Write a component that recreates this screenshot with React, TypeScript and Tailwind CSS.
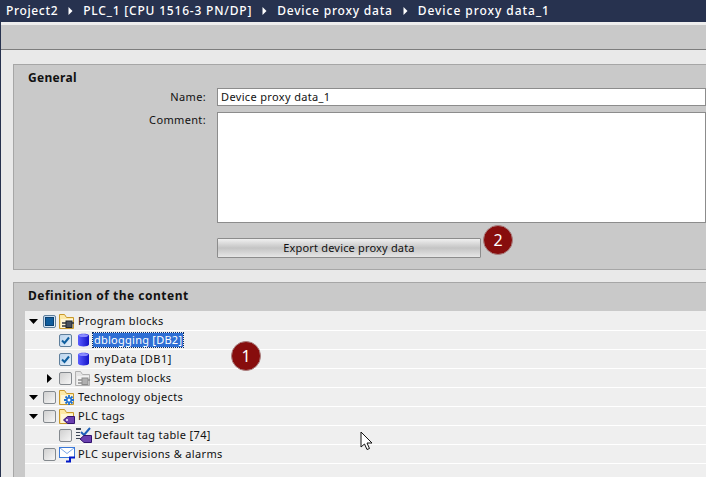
import React from "react";

const F = "font-['Noto_Sans',sans-serif]";

function Caret({ open }: { open?: boolean }) {
  return (
    <svg width="9" height="9" viewBox="0 0 9 9" className="shrink-0">
      {open ? <path d="M0 2H9L4.5 7Z" fill="#000" /> : <path d="M2 0V9L7 4.5Z" fill="#000" />}
    </svg>
  );
}

function Check({ state }: { state: "none" | "check" | "partial" }) {
  const bg =
    state === "none"
      ? "bg-gradient-to-br from-[#d0d0d0] to-[#f6f6f6] border-[#84898e]"
      : "bg-gradient-to-br from-[#b9d3ec] to-[#e6f0fa] border-[#5f7f9c]";
  return (
    <div className={`w-[13px] h-[13px] rounded-[2px] border ${bg} shrink-0 flex items-center justify-center`}>
      {state === "check" && (
        <svg width="11" height="11" viewBox="0 0 11 11">
          <path d="M2 5.5L4.5 8L9 2.5" fill="none" stroke="#0f5f9f" strokeWidth="2" />
        </svg>
      )}
      {state === "partial" && <div className="w-[9px] h-[9px] bg-[#0f5c9c] border border-[#0a3f70]" />}
    </div>
  );
}

function Folder({ children, grey }: { children?: React.ReactNode; grey?: boolean }) {
  const stroke = grey ? "#b0b0b0" : "#c8982c";
  const fill = grey ? "#e4e4e4" : "#fde9a6";
  return (
    <svg width="18" height="17" viewBox="0 0 18 17" className="shrink-0">
      <path d="M0.5 15.5V1.5H5.5L7.5 4.5H14.5V15.5Z" fill={fill} stroke={stroke} />
      <rect x="2" y="6" width="12" height="9" fill={grey ? "#f2f2f2" : "#fff6d6"} />
      {children}
    </svg>
  );
}

const Block = ({ grey }: { grey?: boolean }) => (
  <g>
    <path d="M3 10H15M3 13H7" stroke={grey ? "#8c8c8c" : "#30343c"} strokeWidth="1.5" />
    <rect x="7" y="8" width="6" height="6.5" fill={grey ? "#b0b0b0" : "#48505c"} stroke={grey ? "#8c8c8c" : "#20242c"} />
  </g>
);

const Tag = () => (
  <g>
    <path d="M4.5 12L8.5 8.5H15.5V15.5H8.5Z" fill="#6a3fb0" stroke="#32136f" />
    <circle cx="8" cy="12" r="1" fill="#fff" />
  </g>
);

const Gear = () => (
  <g>
    <path d="M10 6V16M5 11H15M6.5 7.5L13.5 14.5M13.5 7.5L6.5 14.5" stroke="#1f6fd0" strokeWidth="1.8" />
    <circle cx="10" cy="11" r="1.5" fill="#fff" />
  </g>
);

const Db = () => (
  <svg width="11" height="14" viewBox="0 0 11 14" className="shrink-0 ml-[3px]">
    <defs>
      <linearGradient id="dbg" x1="0" x2="1" y1="0" y2="0">
        <stop offset="0" stopColor="#5a5cff" />
        <stop offset="1" stopColor="#1414c8" />
      </linearGradient>
    </defs>
    <path d="M0 2.5C0 0 11 0 11 2.5V11.5C11 14 0 14 0 11.5Z" fill="url(#dbg)" />
    <ellipse cx="5.5" cy="2.5" rx="4.5" ry="1.5" fill="#8a8cff" />
  </svg>
);

const TagTable = () => (
  <svg width="18" height="17" viewBox="0 0 18 17" className="shrink-0">
    <path d="M1 1H6V3H1ZM1 5H5V6H1ZM1 8H5V9H1ZM1 11H5V12H1Z" fill="#3c4656" />
    <path d="M6 5L9 8L15 1" fill="none" stroke="#1c5fb8" strokeWidth="2" />
    <path d="M5 12L9 8.5H16.5V15.5H9Z" fill="#6a3fb0" stroke="#32136f" />
  </svg>
);

const Alarm = () => (
  <svg width="18" height="17" viewBox="0 0 18 17" className="shrink-0">
    <rect x="0.5" y="1.5" width="15" height="10" fill="#fff" stroke="#3a78d8" />
    <path d="M1 2L8 7.5L15 2" fill="none" stroke="#7aa6e6" />
    <path d="M7 15.5H11V11.5H16" fill="none" stroke="#0018c8" strokeWidth="2" />
  </svg>
);

function Row({
  indent,
  caret,
  check,
  icon,
  children,
}: {
  indent: string;
  caret?: "open" | "closed";
  check: "none" | "check" | "partial";
  icon: React.ReactNode;
  children: React.ReactNode;
}) {
  return (
    <div className="h-[19px] border-b border-white flex items-center shrink-0">
      <div className={`${indent} flex items-center shrink-0`}>
        <div className="w-[9px] mr-[5px] flex justify-center shrink-0">
          {caret && <Caret open={caret === "open"} />}
        </div>
        <Check state={check} />
      </div>
      <div className="ml-[3px] flex items-center">{icon}</div>
      {children}
    </div>
  );
}

const Txt = ({ children }: { children: React.ReactNode }) => (
  <span className="ml-[1px] text-[11px] tracking-[0.35px] text-[#111] leading-[14px] whitespace-nowrap">{children}</span>
);

function Crumb({ children, cls }: { children: React.ReactNode; cls: string }) {
  return <span className={`whitespace-nowrap ${cls}`}>{children}</span>;
}

const Sep = () => (
  <svg width="5" height="8" viewBox="0 0 5 8" className="mx-[10px] shrink-0">
    <path d="M0.5 0V8L4.5 4Z" fill="#fff" />
  </svg>
);

const Badge = ({ cls, n }: { cls: string; n: string }) => (
  <div className={`absolute ${cls} w-[30px] h-[30px] rounded-full bg-[#870d0d] text-white text-[16px] flex items-center justify-center border border-[#a98080]`}>
    {n}
  </div>
);

export default function App() {
  return (
    <div className={`${F} w-[706px] h-[477px] overflow-hidden bg-[#e9e9e9] flex flex-col border-l border-[#27324f]`}>
      <div className="h-[22px] shrink-0 bg-[#27324f] flex items-center pl-[5px] text-white text-[12px] font-medium">
        <Crumb cls="tracking-[0.65px]">Project2</Crumb>
        <Sep />
        <Crumb cls="tracking-[0.8px]">PLC_1 [CPU 1516-3 PN/DP]</Crumb>
        <Sep />
        <Crumb cls="tracking-[0.8px]">Device proxy data</Crumb>
        <Sep />
        <Crumb cls="tracking-[0.95px]">Device proxy data_1</Crumb>
      </div>
      <div className="h-[3px] shrink-0 bg-[#eeeeee]" />
      <div className="h-[25px] shrink-0 bg-[#c9c9c9] border-b border-[#7d7d7d]" />

      <div className="flex-1 pl-[12px] pt-[14px] flex flex-col">
        <section className="h-[206px] bg-[#c9c9c9] border border-r-0 border-[#a6a6a6] pl-[14px] pt-[5px] relative shrink-0">
          <h2 className="text-[12px] font-bold tracking-[0.3px] leading-[16px] text-[#111]">General</h2>
          <div className="flex items-center mt-[2px]">
            <label className="w-[178px] text-right text-[11px] tracking-[0.35px] text-[#111]">Name:</label>
            <div className="ml-[11px] flex-1 h-[18px] bg-white border border-[#8c8c8c] flex items-center pl-[3px] text-[11px] tracking-[0.35px] text-[#111]">
              Device proxy data_1
            </div>
          </div>
          <div className="flex mt-[6px]">
            <label className="w-[178px] text-right text-[11px] tracking-[0.35px] text-[#111]">Comment:</label>
            <div className="ml-[11px] flex-1 h-[111px] bg-white border border-[#8c8c8c]" />
          </div>
          <div className="flex items-center mt-[15px] ml-[189px]">
            <button className="w-[264px] h-[20px] border border-[#8c8c8c] rounded-[1px] bg-gradient-to-b from-[#f0f0f0] via-[#c4c4c4] to-[#e6e6e6] text-[11px] tracking-[0.18px] text-[#111] flex items-center justify-center">
              Export device proxy data
            </button>
            <Badge cls="left-[469px] top-[160px]" n="2" />
          </div>
        </section>

        <section className="mt-[12px] flex-1 bg-[#efefef] border-t border-l border-[#a6a6a6] relative flex flex-col">
          <div className="h-[28px] bg-[#c9c9c9] shrink-0 pl-[14px] pt-[5px] text-[12px] font-bold tracking-[0.5px] leading-[16px] text-[#111]">
            Definition of the content
          </div>
          <div className="flex-1 flex">
            <div className="w-[11px] bg-[#c9c9c9] shrink-0" />
            <div className="flex-1 flex flex-col pt-[1px]">
              <Row indent="pl-[4px]" caret="open" check="partial" icon={<Folder><Block /></Folder>}>
                <Txt>Program blocks</Txt>
              </Row>
              <Row indent="pl-[20px]" check="check" icon={<div className="w-[18px] flex"><Db /></div>}>
                <span className="bg-[#2f6fd4] text-white text-[11px] tracking-[0.25px] leading-[14px] px-[1px] outline-1 outline-dotted outline-[#0a2a60] whitespace-nowrap">
                  dblogging [DB2]
                </span>
              </Row>
              <Row indent="pl-[20px]" check="check" icon={<div className="w-[18px] flex"><Db /></div>}>
                <span className="ml-[1px] text-[11px] tracking-[0.5px] text-[#111] leading-[14px] whitespace-nowrap">myData [DB1]</span>
              </Row>
              <Row indent="pl-[20px]" caret="closed" check="none" icon={<Folder grey><Block grey /></Folder>}>
                <Txt>System blocks</Txt>
              </Row>
              <Row indent="pl-[4px]" caret="open" check="none" icon={<Folder><Gear /></Folder>}>
                <Txt>Technology objects</Txt>
              </Row>
              <Row indent="pl-[4px]" caret="open" check="none" icon={<Folder><Tag /></Folder>}>
                <Txt>PLC tags</Txt>
              </Row>
              <Row indent="pl-[20px]" check="none" icon={<TagTable />}>
                <Txt>Default tag table [74]</Txt>
              </Row>
              <Row indent="pl-[4px]" check="none" icon={<Alarm />}>
                <Txt>PLC supervisions &amp; alarms</Txt>
              </Row>
            </div>
          </div>
          <Badge cls="left-[217px] top-[58px]" n="1" />
          <svg width="14" height="20" viewBox="0 0 14 20" className="absolute left-[346px] top-[148px]">
            <path d="M1 1V16L4.5 13L7 18.5L9.5 17.5L7 12H12Z" fill="#fff" stroke="#111" />
          </svg>
        </section>
      </div>
    </div>
  );
}
